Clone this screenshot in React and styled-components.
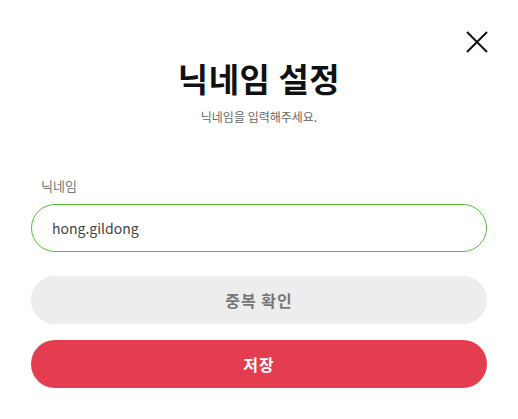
import React from 'react';
import styled, { createGlobalStyle } from 'styled-components';

const GlobalStyle = createGlobalStyle`
  html, body {
    margin: 0;
    padding: 0;
    background: #fff;
    font-family: "Noto Sans CJK KR", "Noto Sans", sans-serif;
  }
  * {
    box-sizing: border-box;
  }
`;

const Modal = styled.div`
  width: 518px;
  height: 419px;
  padding: 30px 31px 0;
  display: flex;
  flex-direction: column;
`;

const TopBar = styled.div`
  display: flex;
  justify-content: flex-end;
  height: 24px;
`;

const CloseButton = styled.button`
  width: 24px;
  height: 24px;
  padding: 0;
  margin-right: -2px;
  border: none;
  background: none;
  cursor: pointer;
  display: flex;
  align-items: center;
  justify-content: center;
`;

const Title = styled.h1`
  margin: 2px 0 0;
  text-align: center;
  font-size: 33px;
  line-height: 44px;
  font-weight: 700;
  color: #111;
  letter-spacing: 0.5px;
`;

const Subtitle = styled.p`
  margin: 8px 0 0;
  text-align: center;
  font-size: 12px;
  line-height: 18px;
  color: #666;
`;

const Label = styled.label`
  display: block;
  margin: 51px 0 0 10px;
  font-size: 13px;
  line-height: 18px;
  color: #777;
`;

const Input = styled.input`
  display: block;
  width: 100%;
  height: 48px;
  margin-top: 9px;
  padding: 0 20px;
  border: 1px solid #52c234;
  border-radius: 24px;
  outline: none;
  font-family: inherit;
  font-size: 14px;
  color: #444;
`;

const Button = styled.button`
  display: block;
  width: 100%;
  height: 48px;
  margin-top: ${(p) => p.$gap}px;
  border: none;
  border-radius: 24px;
  font-family: inherit;
  font-size: 16px;
  font-weight: 700;
  letter-spacing: 1px;
  background: ${(p) => (p.$primary ? '#e33d4f' : '#ededed')};
  color: ${(p) => (p.$primary ? '#fff' : '#777')};
  cursor: pointer;
`;

export default function App() {
  return (
    <>
      <GlobalStyle />
      <Modal>
        <TopBar>
          <CloseButton aria-label="닫기">
            <svg width="22" height="22" viewBox="0 0 22 22">
              <path d="M1 1L21 21M21 1L1 21" stroke="#111" strokeWidth="2" fill="none" />
            </svg>
          </CloseButton>
        </TopBar>
        <Title>닉네임 설정</Title>
        <Subtitle>닉네임을 입력해주세요.</Subtitle>
        <Label htmlFor="nickname">닉네임</Label>
        <Input id="nickname" defaultValue="hong.gildong" />
        <Button $gap={24}>중복 확인</Button>
        <Button $gap={16} $primary>저장</Button>
      </Modal>
    </>
  );
}
